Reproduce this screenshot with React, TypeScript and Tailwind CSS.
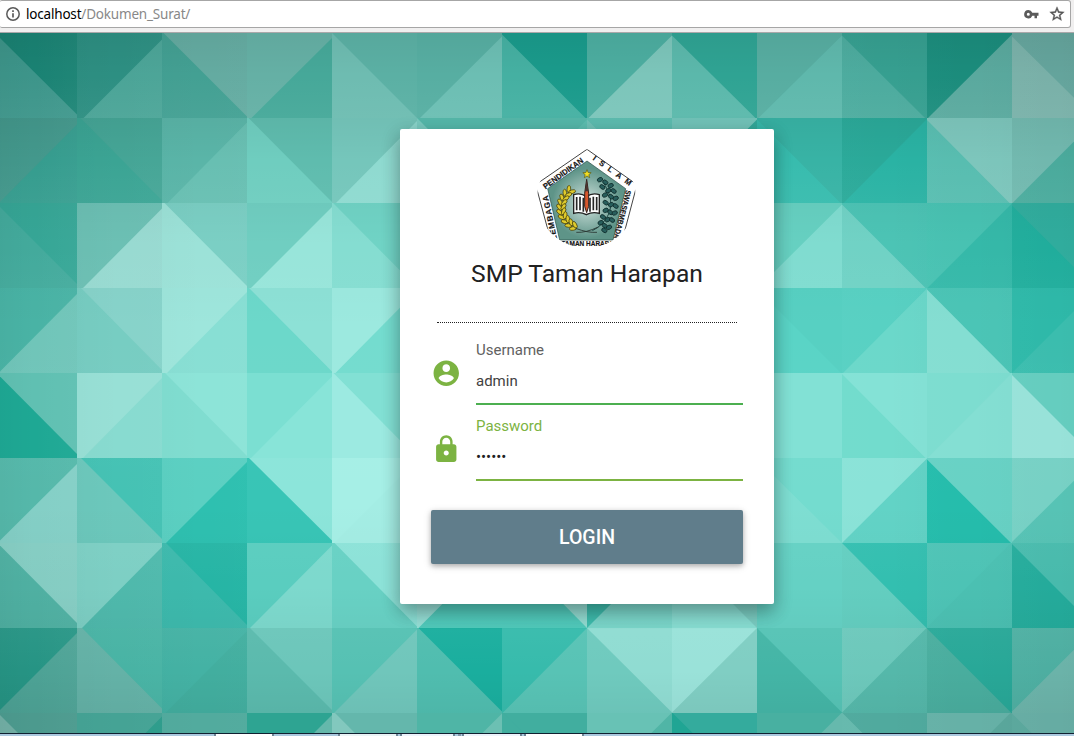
import React from "react";

type Pair = [string, string];
type Point = [number, number];

// Each cell is split by one diagonal: [upper half, lower half].
const CELLS: Pair[][] = [
  [["#1a8273", "#3d958a"], ["#2d8f82", "#4ba497"], ["#64aba1", "#43a093"], ["#65b0a5", "#46a899"], ["#5bb0a4", "#6ebcb1"], ["#57aea2", "#6cbeb3"], ["#1a9a8b", "#45b0a2"], ["#4cada0", "#7cc5ba"], ["#2fa393", "#5bb8ab"], ["#57ada1", "#5fb8ac"], ["#369f90", "#4cab9e"], ["#1b8c7c", "#5aa99e"], ["#64a49c", "#79b0a8"]],
  [["#43988c", "#359c8e"], ["#45a596", "#3ba494"], ["#5ab5a8", "#68bfb2"], ["#5fbcae", "#6fcdbf"], ["#75c6bb", "#8fdad0"], ["#58bdaf", "#7ccfc4"], ["#58bdaf", "#60c4b6"], ["#60c2b5", "#75c9be"], ["#75c9be", "#33ad9e"], ["#38b3a5", "#38bcae"], ["#2aa999", "#2ab3a4"], ["#7dc6bc", "#58bdb0"], ["#71b8ae", "#4aaa9c"]],
  [["#36a696", "#43aa9c"], ["#6cc0b4", "#98dad1"], ["#7bcfc4", "#9ce2d8"], ["#70cec1", "#98e5da"], ["#70d3c5", "#85ddd1"], ["#70d3c5", "#85ddd1"], ["#70d3c5", "#85ddd1"], ["#70d3c5", "#85ddd1"], ["#70d3c5", "#85ddd1"], ["#66d0c1", "#80dcd0"], ["#4cc4b5", "#70d2c5"], ["#48c2b2", "#35b9a9"], ["#30ac9d", "#20ad9c"]],
  [["#49b3a5", "#70c5b9"], ["#87d3ca", "#77cdc2"], ["#9ee6dc", "#88dfd4"], ["#8de1d6", "#6cd8ca"], ["#9ce9df", "#74dccf"], ["#74dccf", "#74dccf"], ["#74dccf", "#74dccf"], ["#74dccf", "#74dccf"], ["#74dccf", "#74dccf"], ["#57d0c2", "#5ad4c6"], ["#58d1c3", "#6bd8ca"], ["#4bc5b6", "#84ded2"], ["#2eb9a9", "#3bbdae"]],
  [["#60c0b2", "#1ea894"], ["#98e0d6", "#88dbd0"], ["#8de4d8", "#80ddd0"], ["#7bdfd2", "#88e4d8"], ["#82e0d4", "#9ceae1"], ["#82e0d4", "#82e0d4"], ["#82e0d4", "#82e0d4"], ["#82e0d4", "#82e0d4"], ["#82e0d4", "#82e0d4"], ["#82e1d5", "#82e1d5"], ["#84e2d6", "#72dccd"], ["#7dddd0", "#84dfd3"], ["#65cdbf", "#98e2d9"]],
  [["#55b8aa", "#84cfc6"], ["#45c2b4", "#6cc8bc"], ["#5bd0c2", "#2ec0b0"], ["#8ce5da", "#38c5b6"], ["#a6efe6", "#a4ede4"], ["#82e0d4", "#82e0d4"], ["#82e0d4", "#82e0d4"], ["#82e0d4", "#82e0d4"], ["#82e0d4", "#82e0d4"], ["#74dccf", "#7eded2"], ["#8ae3d8", "#62d3c6"], ["#68d2c5", "#25bdac"], ["#77d1c5", "#57c3b5"]],
  [["#84ccc2", "#4fb0a2"], ["#7dcfc4", "#4fb9ac"], ["#26b5a5", "#3dbaad"], ["#5acdbf", "#7dd9cd"], ["#8de2d8", "#68d1c4"], ["#98e2d9", "#52cdbe"], ["#95dfd5", "#52cdbe"], ["#3fbfb0", "#7cd9cd"], ["#7ccfc4", "#8ae0d5"], ["#65d1c4", "#65d1c4"], ["#33bfb0", "#63cec0"], ["#4dc3b5", "#4bc0b2"], ["#48baac", "#24ab9b"]],
  [["#269484", "#4da295"], ["#48b3a4", "#64b2a7"], ["#44b2a4", "#42ae9f"], ["#6cc6ba", "#5bbaad"], ["#56c1b3", "#70c6bb"], ["#1aae9e", "#50bdaf"], ["#37bbac", "#58c3b5"], ["#90dcd2", "#6fcabe"], ["#9ae2d9", "#80cec3"], ["#56c3b5", "#44b5a6"], ["#6cc8bb", "#55b8aa"], ["#28a898", "#49ad9e"], ["#4daea1", "#6bb3a9"]],
  [["#4c9a8e", "#71aea4"], ["#45a395", "#2d9c8b"], ["#52ab9e", "#52ab9e"], ["#2ea492", "#64b8ab"], ["#64b7ac", "#82c8be"], ["#4fb5a6", "#6cc0b3"], ["#41ae9f", "#41ae9f"], ["#68c2b5", "#50b5a6"], ["#34ab9d", "#20a594"], ["#48b0a1", "#66b9ad"], ["#50aa9e", "#66b9ad"], ["#66b1a7", "#5aa79c"], ["#66aca3", "#5aa79c"]],
];

const SIZE = 85;
const ROW_SHADE = [0.045, 0.04, 0.025, 0.01, 0, -0.01, -0.025, -0.035, 0];
const COL_SHADE = [0.03, 0.015, 0.01, 0, 0, 0, 0, 0, 0, 0, -0.01, -0.01, -0.015];

// Points where the diagonals cross, which drift a little from the square grid.
const NODE_X = [-2.5, 82, 166, 250, 334.5, 418.5, 503, 587, 672, 757, 842, 926.5, 1011, 1096];
const NODE_Y = [2.5, 86.5, 171.5, 256, 341, 426, 510, 595, 679.5, 764];

function clip(points: Point[], side: (p: Point) => number): Point[] {
  const out: Point[] = [];
  points.forEach((p, i) => {
    const q = points[(i + 1) % points.length];
    const a = side(p);
    const b = side(q);
    if (a >= 0) out.push(p);
    if (a * b < 0) {
      const t = a / (a - b);
      out.push([p[0] + (q[0] - p[0]) * t, p[1] + (q[1] - p[1]) * t]);
    }
  });
  return out;
}

function Mosaic() {
  return (
    <svg className="absolute inset-0 h-full w-full" viewBox="0 0 1074 700" aria-hidden="true">
      <defs>
        <linearGradient id="down" x1="0" y1="0" x2="0" y2="1">
          <stop offset="0" stopColor="#000" />
          <stop offset=".5" stopColor="#000" stopOpacity="0" />
          <stop offset=".5" stopColor="#d0fff5" stopOpacity="0" />
          <stop offset="1" stopColor="#d0fff5" />
        </linearGradient>
        <linearGradient id="up" x1="0" y1="1" x2="0" y2="0" href="#down" />
        <linearGradient id="right" x1="0" y1="0" x2="1" y2="0" href="#down" />
        <linearGradient id="left" x1="1" y1="0" x2="0" y2="0" href="#down" />
      </defs>
      {CELLS.map((row, r) =>
        row.map(([upper, lower], c) => {
          const x = -8 + c * SIZE;
          const y = r * SIZE;
          const square: Point[] = [[x, y], [x + SIZE, y], [x + SIZE, y + SIZE], [x, y + SIZE]];
          const falling = (r + c) % 2 === 0;
          const ax = NODE_X[c];
          const bx = NODE_X[c + 1];
          const ay = falling ? NODE_Y[r] : NODE_Y[r + 1];
          const by = falling ? NODE_Y[r + 1] : NODE_Y[r];
          const half = clip(square, ([px, py]) => py - (ay + ((px - ax) * (by - ay)) / (bx - ax)));
          return (
            <g key={`${r}-${c}`}>
              <rect x={x} y={y} width={SIZE} height={SIZE} fill={upper} />
              <polygon points={half.map((p) => p.join(",")).join(" ")} fill={lower} />
            </g>
          );
        }),
      )}
      {ROW_SHADE.map((s, r) => (
        <rect key={r} x="0" y={r * SIZE} width="1074" height={SIZE} fill={s > 0 ? "url(#down)" : "url(#up)"} opacity={Math.abs(s)} />
      ))}
      {COL_SHADE.map((s, c) => (
        <rect key={c} x={-8 + c * SIZE} y="0" width={SIZE} height="700" fill={s > 0 ? "url(#right)" : "url(#left)"} opacity={Math.abs(s)} />
      ))}
    </svg>
  );
}

function Wheat() {
  const stem: [number, number, number][] = [
    [127, 148, 40], [115, 158, 30], [106, 170, 15], [100, 183, 5], [97, 197, -4], [97, 211, -14], [101, 225, -27], [109, 238, -40], [119, 249, -52], [131, 258, -64],
  ];
  return (
    <g fill="#dfcb2d" stroke="#3a3508" strokeWidth="2">
      {stem.map(([x, y, a]) => (
        <g key={y} transform={`translate(${x} ${y}) rotate(${a})`}>
          <ellipse cx="-7.500" cy="0" rx="5.500" ry="11" transform="rotate(-35)" />
          <ellipse cx="7.500" cy="0" rx="5.500" ry="11" transform="rotate(35)" />
        </g>
      ))}
    </g>
  );
}

function Cotton() {
  const leaves: Point[] = [
    [213, 119], [229, 127], [245, 137], [220, 141], [238, 152], [254, 153], [228, 165], [246, 170], [260, 175], [230, 188], [246, 194], [260, 198], [230, 211], [244, 217], [257, 219], [222, 231], [236, 239], [249, 240], [215, 248], [227, 257], [240, 262], [226, 271],
  ];
  return (
    <g>
      <path d="M222 125 Q258 180 240 220 Q225 255 190 272" fill="none" stroke="#1c4744" strokeWidth="3" />
      {leaves.map(([x, y], i) => (
        <ellipse key={i} cx={x} cy={y} rx="8.5" ry="6" fill="#285e5c" stroke="#102f2e" strokeWidth="2.5" transform={`rotate(${i % 2 ? 35 : -25} ${x} ${y})`} />
      ))}
    </g>
  );
}

function Crest() {
  return (
    <svg className="mr-px h-[99px] w-[99px]" viewBox="24 27 297 297" role="img" aria-label="Logo">
      <defs>
        <clipPath id="round"><circle cx="172.500" cy="175.500" r="148" /></clipPath>
        <radialGradient id="field" cx="174" cy="190" r="105" gradientUnits="userSpaceOnUse">
          <stop offset="0" stopColor="#d5e6e2" />
          <stop offset=".45" stopColor="#9dbfb7" />
          <stop offset="1" stopColor="#5e9488" />
        </radialGradient>
        <path id="edge-nw" d="M47 150 L176 57" />
        <path id="edge-ne" d="M182 53 L312 146" />
        <path id="edge-e" d="M291 149 L248 318" />
        <path id="edge-w" d="M85 301 L53 147" />
      </defs>
      <g clipPath="url(#round)">
        <path d="M174 28 L324 134 L272 330 L73 330 L20 134 Z" fill="#fff" stroke="#444" strokeWidth="3" />
        <path d="M174 63 L290 146 L252 300 L92 300 L56 146 Z" fill="url(#field)" stroke="#244943" strokeWidth="2" />
        <g className="font-['Liberation_Sans'] font-bold" fill="#151515" stroke="#151515" strokeWidth=".6">
          <text fontSize="24"><textPath href="#edge-nw" startOffset="3" textLength="142" lengthAdjust="spacingAndGlyphs">PENDIDIKAN</textPath></text>
          <text fontSize="23"><textPath href="#edge-ne" startOffset="10" textLength="136">ISLAM</textPath></text>
          <text fontSize="23"><textPath href="#edge-e" startOffset="0" textLength="150" lengthAdjust="spacingAndGlyphs">SWASEMBADA</textPath></text>
          <text fontSize="24"><textPath href="#edge-w" startOffset="1" textLength="138">LEMBAGA</textPath></text>
          <text x="97" y="318" fontSize="22" textLength="170" lengthAdjust="spacingAndGlyphs">TAMAN HARAPAN</text>
        </g>
        <path d="M174 89 l3.500 8.500 9 .5 -7 6 2.500 9 -8 -5 -8 5 2.500 -9 -7 -6 9 -.5 Z" fill="#f2df25" stroke="#5b5712" strokeWidth="2" />
        <Wheat />
        <Cotton />
        <path d="M134 164 Q156 157 172 170 Q190 157 211 164 V220 Q190 214 172 224 Q154 214 134 220 Z" fill="#fff" stroke="#222" strokeWidth="4" />
        <path d="M143 171 V211 M153 170 V211 M163 173 V215 M183 173 V215 M193 170 V211 M203 171 V211" stroke="#252525" strokeWidth="5" />
        <path d="M142 277 Q170 279 208 261 M204 277 Q176 279 140 265" fill="none" stroke="#26332f" strokeWidth="2.500" />
        <path d="M173 118 L167 160 V199 L173 218 L179 199 V160 Z" fill="#d6572c" stroke="#2c201d" strokeWidth="3" />
        <path d="M173 118 L168 154 H178 Z" fill="#4a3430" />
      </g>
    </svg>
  );
}

function AddressBar() {
  return (
    <header className="h-[33px] border-b border-[#aaa8aa] bg-[#f0efef]">
      <div className="mr-[3px] flex h-7 items-center rounded-r-[3px] rounded-l-[2px] border border-l-0 border-[#a6a6a6] bg-white pr-[5px] pl-[6px]">
        <svg className="h-[14px] w-[14px]" viewBox="0 0 14 14" fill="none" stroke="#5a5a5a">
          <circle cx="7" cy="7" r="6.200" strokeWidth="1.500" />
          <path d="M7 6.200V10.500" strokeWidth="1.700" />
          <path d="M7 3.300V5" strokeWidth="1.700" />
        </svg>
        <p className="ml-[6px] flex-1 font-['Noto_Sans',sans-serif] text-[13.5px] leading-[18px] tracking-[-0.19px] text-[#888]">
          <span className="text-black">localhost</span>/Dokumen_Surat/
        </p>
        <svg className="mr-[10px] h-[9px] w-[15px]" viewBox="0 0 15 9" fill="#5a5a5a">
          <path fillRule="evenodd" d="M4.300 0a4.200 4.200 0 1 0 4 5.700H10.500V8.200H13V5.700H14.500V2.800H8.300A4.200 4.200 0 0 0 4.300 0Zm0 2.700a1.500 1.500 0 1 1 0 3 1.500 1.500 0 0 1 0-3Z" />
        </svg>
        <svg className="h-[16px] w-[16px]" viewBox="1 1 22 22" fill="#555">
          <path d="M22 9.240l-7.190-.62L12 2 9.190 8.630 2 9.240l5.460 4.730L5.820 21 12 17.270 18.180 21l-1.630-7.030L22 9.240zM12 15.400l-3.760 2.270 1-4.280-3.320-2.880 4.380-.38L12 6.100l1.710 4.040 4.380.38-3.320 2.880 1 4.280L12 15.400z" stroke="#555" strokeWidth=".5" />
        </svg>
      </div>
    </header>
  );
}

function Field({ icon, label, type, value, active }: { icon: string; label: string; type: string; value: string; active?: boolean }) {
  return (
    <div className="flex h-[76px]">
      <svg className="mt-[17px] h-[30.500px] w-[30.500px] shrink-0" viewBox="0 0 24 24" fill="#7cb342">
        <path d={icon} />
      </svg>
      <label className={active ? "ml-[14.500px] flex w-[267px] flex-col text-[#7cb342]" : "ml-[14.500px] flex w-[267px] flex-col text-[#616161]"}>
        <span className="h-[18px] text-[15px] leading-[18px]">{label}</span>
        <input
          className={
            active
              ? "h-[46px] w-full border-b-2 border-[#7cb342] text-[15px] text-[#212121] outline-none"
              : "h-[46px] w-full border-b-2 border-[#4caf50] text-[15px] text-[#424242] outline-none"
          }
          type={type}
          defaultValue={value}
        />
      </label>
    </div>
  );
}

const ACCOUNT =
  "M12 2C6.480 2 2 6.480 2 12s4.480 10 10 10 10-4.480 10-10S17.520 2 12 2zm0 3c1.660 0 3 1.340 3 3s-1.340 3-3 3-3-1.340-3-3 1.340-3 3-3zm0 14.200c-2.500 0-4.710-1.280-6-3.220.03-1.990 4-3.080 6-3.080 1.990 0 5.970 1.090 6 3.080-1.290 1.940-3.500 3.220-6 3.220z";
const LOCK =
  "M18 8h-1V6c0-2.760-2.240-5-5-5S7 3.240 7 6v2H6c-1.100 0-2 .9-2 2v10c0 1.100.9 2 2 2h12c1.100 0 2-.9 2-2V10c0-1.100-.9-2-2-2zm-6 9c-1.100 0-2-.9-2-2s.9-2 2-2 2 .9 2 2-.9 2-2 2zm3.100-9H8.900V6c0-1.710 1.390-3.100 3.100-3.100 1.710 0 3.100 1.390 3.100 3.100v2z";

function LoginCard() {
  return (
    <form
      className="relative ml-[400px] flex h-[475px] w-[374px] flex-col rounded-[2px] bg-white pt-[20px] pr-[31px] pl-[31px] shadow-[0_8px_17px_0_rgba(0,0,0,0.2),0_6px_20px_0_rgba(0,0,0,0.19)]"
      onSubmit={(e) => e.preventDefault()}
    >
      <div className="flex justify-center"><Crest /></div>
      <h1 className="mt-[11px] text-center text-[24.650px] leading-[30px] whitespace-nowrap text-[#212121]">SMP Taman Harapan</h1>
      <div className="mx-[6px] mt-[33px] border-t border-dotted border-[#222]" />
      <div className="mt-[18px]">
        <Field icon={ACCOUNT} label="Username" type="text" value="admin" />
        <Field icon={LOCK} label="Password" type="password" value="123456" active />
      </div>
      <button className="mt-[17px] h-[54px] rounded-[2px] bg-[#607d8b] pt-[2px] text-[19.500px] font-medium text-white shadow-[0_2px_5px_0_rgba(0,0,0,0.26),0_2px_10px_0_rgba(0,0,0,0.12)]">
        LOGIN
      </button>
    </form>
  );
}

function Taskbar() {
  return (
    <footer className="flex h-[3px] border-t border-[#102030] bg-[#abc8de]">
      <div className="ml-[214px] h-[2px] w-[60px] border-x-2 border-[#718696] bg-white" />
      <div className="ml-[64px] h-[2px] w-[60px] border-x-2 border-[#718696] bg-[#eaf3f5]" />
      <div className="ml-[2px] h-[2px] w-[55px] border-x-2 border-[#718696] bg-[#edf3fb]" />
      <div className="ml-[3px] h-[2px] w-[3px] bg-[#8497a9]" />
      <div className="ml-px h-[2px] w-[60px] border-x-2 border-[#718696] bg-[#edf3fb]" />
      <div className="ml-[2px] h-[2px] w-[60px] border-x-2 border-[#718696] bg-white" />
    </footer>
  );
}

export default function App() {
  return (
    <div className="flex h-[736px] w-[1074px] flex-col overflow-hidden font-['Roboto',sans-serif]">
      <AddressBar />
      <main className="relative h-[700px] overflow-hidden pt-[96px]">
        <Mosaic />
        <LoginCard />
      </main>
      <Taskbar />
    </div>
  );
}
